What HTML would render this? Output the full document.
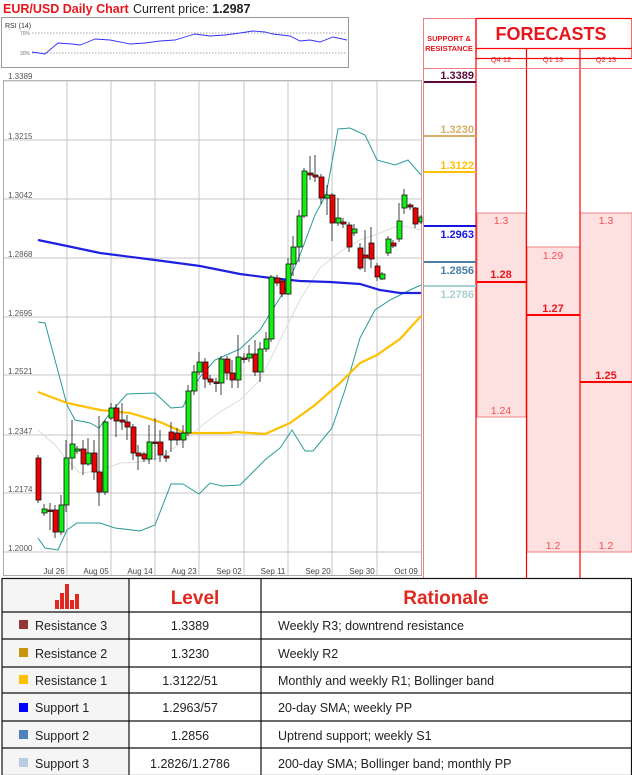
<!DOCTYPE html>
<html><head><meta charset="utf-8"><style>
body{margin:0;width:632px;height:775px;background:#fff;position:relative;overflow:hidden;font-family:"Liberation Sans",sans-serif}
.t{position:absolute;white-space:nowrap}
</style></head><body>
<svg width="632" height="775" style="position:absolute;left:0;top:0" font-family="Liberation Sans, sans-serif">
<text x="3" y="13" font-size="12.5" font-weight="bold" fill="#e8161b">EUR/USD Daily Chart</text>
<text x="133" y="13" font-size="12.5" fill="#222">Current price: <tspan font-weight="bold">1.2987</tspan></text>
<!-- RSI -->
<rect x="1.5" y="17.5" width="347" height="50" fill="#fff" stroke="#999"/>
<text x="5" y="28" font-size="7" fill="#333">RSI (14)</text>
<text x="20" y="35" font-size="5" fill="#777">70%</text>
<text x="20" y="55" font-size="5" fill="#777">30%</text>
<line x1="32" y1="33" x2="347" y2="33" stroke="#888" stroke-dasharray="1.5,1.5" stroke-width="0.7"/>
<line x1="32" y1="53" x2="347" y2="53" stroke="#888" stroke-dasharray="1.5,1.5" stroke-width="0.7"/>
<polyline fill="none" stroke="#3030ff" stroke-width="0.9" points="32,52 45,54 58,43 72,44 80,45 88,42 95,39 110,40 130,44 145,43 160,41 175,40 185,37 195,34 210,36 225,35 240,33 253,31 265,32 273,34 290,36 300,41 310,40 320,42 333,37 347,40"/>
<!-- main chart -->
<rect x="3.5" y="80.5" width="418" height="495" fill="#fff" stroke="#aaa"/>
<g stroke="#c4c4c4" stroke-width="1">
<line x1="4" y1="81" x2="421" y2="81"/><line x1="4" y1="140" x2="421" y2="140"/><line x1="4" y1="199" x2="421" y2="199"/><line x1="4" y1="258" x2="421" y2="258"/><line x1="4" y1="317" x2="421" y2="317"/><line x1="4" y1="375" x2="421" y2="375"/><line x1="4" y1="435" x2="421" y2="435"/><line x1="4" y1="493" x2="421" y2="493"/><line x1="4" y1="552" x2="421" y2="552"/>
<line x1="67" y1="81" x2="67" y2="575"/><line x1="111" y1="81" x2="111" y2="575"/><line x1="155" y1="81" x2="155" y2="575"/><line x1="199" y1="81" x2="199" y2="575"/><line x1="244" y1="81" x2="244" y2="575"/><line x1="288" y1="81" x2="288" y2="575"/><line x1="332" y1="81" x2="332" y2="575"/><line x1="377" y1="81" x2="377" y2="575"/>
</g>
<g font-size="8" fill="#555">
<text x="8" y="79">1.3389</text><text x="8" y="139">1.3215</text><text x="8" y="198">1.3042</text><text x="8" y="257">1.2868</text><text x="8" y="316">1.2695</text><text x="8" y="374">1.2521</text><text x="8" y="434">1.2347</text><text x="8" y="492">1.2174</text><text x="8" y="551">1.2000</text>
</g>
<g font-size="8" fill="#444" text-anchor="middle">
<text x="54" y="574">Jul 26</text><text x="96" y="574">Aug 05</text><text x="140" y="574">Aug 14</text><text x="184" y="574">Aug 23</text><text x="229" y="574">Sep 02</text><text x="273" y="574">Sep 11</text><text x="318" y="574">Sep 20</text><text x="362" y="574">Sep 30</text><text x="406" y="574">Oct 09</text>
</g>
<!-- indicator lines -->
<polyline fill="none" stroke="#ddd" stroke-width="1" points="38,430 55,445 67,460 80,473 99,471 120,463 140,462 160,458 185,440 205,423 220,412 240,400 260,380 285,330 300,300 320,268 340,252 360,240 380,233 400,225 421,230"/>
<polyline fill="none" stroke="#2a9a9a" stroke-width="1" points="38,322 45,323 55,360 67,405 75,420 90,423 99,428 111,412 127,394 155,393 171,408 183,407 188,396 200,377 215,360 240,349 260,330 271,312 285,290 300,255 315,215 326,195 338,129 350,128 365,135 377,160 395,165 408,160 421,175"/>
<polyline fill="none" stroke="#2a9a9a" stroke-width="1" points="38,538 45,548 58,550 67,530 77,523 100,523 115,528 140,531 155,525 171,484 183,484 199,494 210,483 222,486 240,485 255,470 266,459 280,448 292,430 305,451 313,451 332,428 345,390 360,338 375,310 390,300 410,290 421,285"/>
<polyline fill="none" stroke="#2020e0" stroke-width="2.2" points="38,240 67,246 100,253 155,260 200,266 240,274 271,278 300,281 330,282 360,284 380,290 400,293 421,293"/>
<polyline fill="none" stroke="#ffc000" stroke-width="2.2" points="38,392 67,403 100,410 130,413 160,422 185,433 230,433 236,432 265,434 290,423 315,405 340,383 360,363 377,355 400,339 421,316"/>
<!-- candles -->
<g stroke="#111" stroke-width="0.8" id="c">
<line x1="38" y1="455" x2="38" y2="503"/><rect x="36" y="458" width="5" height="42" fill="#e00"/>
<line x1="44" y1="504" x2="44" y2="516"/><rect x="42" y="509" width="5" height="4" fill="#1e1"/>
<line x1="50" y1="503" x2="50" y2="530"/><rect x="48" y="510" width="5" height="1.5" fill="#e00"/>
<line x1="55" y1="505" x2="55" y2="538"/><rect x="53" y="510" width="5" height="22" fill="#e00"/>
<line x1="61" y1="495" x2="61" y2="535"/><rect x="59" y="505" width="5" height="27" fill="#1e1"/>
<line x1="66" y1="440" x2="66" y2="512"/><rect x="64" y="458" width="5" height="47" fill="#1e1"/>
<line x1="72" y1="420" x2="72" y2="470"/><rect x="70" y="444" width="5" height="14" fill="#1e1"/>
<line x1="77" y1="446" x2="77" y2="454"/><rect x="75" y="449" width="5" height="2" fill="#1e1"/>
<line x1="83" y1="440" x2="83" y2="475"/><rect x="81" y="449" width="5" height="15" fill="#e00"/>
<line x1="88" y1="438" x2="88" y2="466"/><rect x="86" y="453" width="5" height="11" fill="#1e1"/>
<line x1="94" y1="440" x2="94" y2="480"/><rect x="92" y="453" width="5" height="19" fill="#e00"/>
<line x1="99" y1="416" x2="99" y2="506"/><rect x="97" y="472" width="5" height="20" fill="#e00"/>
<line x1="105" y1="420" x2="105" y2="495"/><rect x="103" y="422" width="5" height="70" fill="#1e1"/>
<line x1="111" y1="403" x2="111" y2="420"/><rect x="109" y="408" width="5" height="10" fill="#1e1"/>
<line x1="116" y1="404" x2="116" y2="437"/><rect x="114" y="408" width="5" height="13" fill="#e00"/>
<line x1="122" y1="403" x2="122" y2="430"/><rect x="120" y="420" width="5" height="2" fill="#e00"/>
<line x1="127" y1="415" x2="127" y2="440"/><rect x="125" y="422" width="5" height="5" fill="#e00"/>
<line x1="133" y1="424" x2="133" y2="460"/><rect x="131" y="427" width="5" height="26" fill="#e00"/>
<line x1="138" y1="445" x2="138" y2="470"/><rect x="136" y="453" width="5" height="3" fill="#e00"/>
<line x1="144" y1="452" x2="144" y2="462"/><rect x="142" y="454" width="5" height="5" fill="#e00"/>
<line x1="149" y1="425" x2="149" y2="464"/><rect x="147" y="442" width="5" height="17" fill="#1e1"/>
<line x1="155" y1="418" x2="155" y2="460"/><rect x="153" y="442" width="5" height="1.5" fill="#e00"/>
<line x1="160" y1="430" x2="160" y2="462"/><rect x="158" y="442" width="5" height="13" fill="#e00"/>
<line x1="166" y1="450" x2="166" y2="462"/><rect x="164" y="456" width="5" height="2" fill="#e00"/>
<line x1="171" y1="422" x2="171" y2="452"/><rect x="169" y="432" width="5" height="8" fill="#e00"/>
<line x1="177" y1="428" x2="177" y2="445"/><rect x="175" y="433" width="5" height="7" fill="#e00"/>
<line x1="183" y1="425" x2="183" y2="448"/><rect x="181" y="433" width="5" height="7" fill="#1e1"/>
<line x1="188" y1="385" x2="188" y2="436"/><rect x="186" y="391" width="5" height="42" fill="#1e1"/>
<line x1="194" y1="365" x2="194" y2="395"/><rect x="192" y="372" width="5" height="19" fill="#1e1"/>
<line x1="199" y1="352" x2="199" y2="375"/><rect x="197" y="362" width="5" height="10" fill="#1e1"/>
<line x1="205" y1="358" x2="205" y2="388"/><rect x="203" y="362" width="5" height="17" fill="#e00"/>
<line x1="210" y1="375" x2="210" y2="385"/><rect x="208" y="379" width="5" height="3" fill="#e00"/>
<line x1="216" y1="378" x2="216" y2="392"/><rect x="214" y="382" width="5" height="1.5" fill="#e00"/>
<line x1="221" y1="356" x2="221" y2="395"/><rect x="219" y="359" width="5" height="24" fill="#1e1"/>
<line x1="227" y1="356" x2="227" y2="380"/><rect x="225" y="359" width="5" height="14" fill="#e00"/>
<line x1="232" y1="360" x2="232" y2="388"/><rect x="230" y="373" width="5" height="7" fill="#e00"/>
<line x1="238" y1="335" x2="238" y2="388"/><rect x="236" y="357" width="5" height="23" fill="#1e1"/>
<line x1="244" y1="353" x2="244" y2="363"/><rect x="242" y="358" width="5" height="1.5" fill="#e00"/>
<line x1="249" y1="345" x2="249" y2="362"/><rect x="247" y="354" width="5" height="4" fill="#1e1"/>
<line x1="255" y1="340" x2="255" y2="376"/><rect x="253" y="354" width="5" height="18" fill="#e00"/>
<line x1="260" y1="342" x2="260" y2="382"/><rect x="258" y="349" width="5" height="23" fill="#1e1"/>
<line x1="266" y1="332" x2="266" y2="352"/><rect x="264" y="339" width="5" height="10" fill="#1e1"/>
<line x1="271" y1="275" x2="271" y2="342"/><rect x="269" y="277" width="5" height="62" fill="#1e1"/>
<line x1="277" y1="275" x2="277" y2="286"/><rect x="275" y="278" width="5" height="5" fill="#e00"/>
<line x1="282" y1="278" x2="282" y2="297"/><rect x="280" y="281" width="5" height="13" fill="#e00"/>
<line x1="288" y1="258" x2="288" y2="295"/><rect x="286" y="264" width="5" height="30" fill="#1e1"/>
<line x1="293" y1="236" x2="293" y2="276"/><rect x="291" y="247" width="5" height="17" fill="#1e1"/>
<line x1="299" y1="210" x2="299" y2="262"/><rect x="297" y="216" width="5" height="31" fill="#1e1"/>
<line x1="304" y1="168" x2="304" y2="218"/><rect x="302" y="171" width="5" height="45" fill="#1e1"/>
<line x1="310" y1="156" x2="310" y2="180"/><rect x="308" y="173" width="5" height="2" fill="#e00"/>
<line x1="315" y1="155" x2="315" y2="182"/><rect x="313" y="175" width="5" height="2" fill="#e00"/>
<line x1="321" y1="174" x2="321" y2="204"/><rect x="319" y="177" width="5" height="21" fill="#e00"/>
<line x1="327" y1="185" x2="327" y2="215"/><rect x="325" y="195" width="5" height="3" fill="#1e1"/>
<line x1="332" y1="193" x2="332" y2="241"/><rect x="330" y="195" width="5" height="28" fill="#e00"/>
<line x1="338" y1="198" x2="338" y2="226"/><rect x="336" y="218" width="5" height="5" fill="#1e1"/>
<line x1="343" y1="218" x2="343" y2="228"/><rect x="341" y="222" width="5" height="2" fill="#e00"/>
<line x1="349" y1="222" x2="349" y2="252"/><rect x="347" y="225" width="5" height="22" fill="#e00"/>
<line x1="354" y1="224" x2="354" y2="236"/><rect x="352" y="229" width="5" height="4" fill="#1e1"/>
<line x1="360" y1="243" x2="360" y2="270"/><rect x="358" y="248" width="5" height="20" fill="#e00"/>
<line x1="365" y1="230" x2="365" y2="272"/><rect x="363" y="255" width="5" height="3" fill="#e00"/>
<line x1="371" y1="227" x2="371" y2="268"/><rect x="369" y="243" width="5" height="16" fill="#e00"/>
<line x1="377" y1="263" x2="377" y2="281"/><rect x="375" y="266" width="5" height="11" fill="#e00"/>
<line x1="382" y1="272" x2="382" y2="280"/><rect x="380" y="274" width="5" height="5" fill="#1e1"/>
<line x1="388" y1="236" x2="388" y2="256"/><rect x="386" y="239" width="5" height="14" fill="#1e1"/>
<line x1="393" y1="240" x2="393" y2="248"/><rect x="391" y="243" width="5" height="3" fill="#e00"/>
<line x1="399" y1="203" x2="399" y2="242"/><rect x="397" y="221" width="5" height="18" fill="#1e1"/>
<line x1="404" y1="189" x2="404" y2="214"/><rect x="402" y="195" width="5" height="13" fill="#1e1"/>
<line x1="410" y1="203" x2="410" y2="210"/><rect x="408" y="205" width="5" height="2" fill="#e00"/>
<line x1="415" y1="207" x2="415" y2="228"/><rect x="413" y="208" width="5" height="16" fill="#e00"/>
<line x1="421" y1="215" x2="421" y2="224"/><rect x="419" y="217" width="3" height="5" fill="#1e1"/>
</g>
<!-- right panel -->
<rect x="424" y="18" width="52" height="560" fill="#fff"/>
<rect x="477" y="213" width="49" height="204" fill="#fde0e0" stroke="#f08080"/>
<rect x="527" y="247" width="53" height="305" fill="#fde0e0" stroke="#f08080"/>
<rect x="580" y="213" width="52" height="339" fill="#fde0e0" stroke="#f08080"/>
<g stroke="#f08080" fill="none">
<line x1="423.5" y1="18" x2="423.5" y2="578"/>
<line x1="424" y1="68.5" x2="476" y2="68.5"/>
</g>
<g stroke="#f00" fill="none" stroke-width="1.2">
<rect x="476" y="18.5" width="156" height="40"/>
<line x1="476" y1="48.5" x2="632" y2="48.5"/>
<line x1="476" y1="18" x2="476" y2="578"/>
<line x1="526.5" y1="48" x2="526.5" y2="578"/>
<line x1="580" y1="48" x2="580" y2="578"/>
<line x1="476" y1="68.5" x2="632" y2="68.5" stroke="#f08080" stroke-width="1"/>
<line x1="424" y1="18.5" x2="476" y2="18.5" stroke="#f08080" stroke-width="1"/>
</g>
<text x="449" y="41" font-size="7.5" fill="#e8161b" text-anchor="middle" font-weight="bold">SUPPORT &amp;</text>
<text x="449" y="51" font-size="7.5" fill="#e8161b" text-anchor="middle" font-weight="bold">RESISTANCE</text>
<text x="551" y="40" font-size="18" fill="#e8161b" text-anchor="middle" font-weight="bold">FORECASTS</text>
<g font-size="7.5" fill="#e8161b" text-anchor="middle"><text x="501" y="62">Q4 12</text><text x="553" y="62">Q1 13</text><text x="606" y="62">Q2 13</text></g>
<g font-size="11" font-weight="bold" text-anchor="end">
<text x="474" y="79" fill="#5a0a3a">1.3389</text>
<text x="474" y="133" fill="#d4b06a">1.3230</text>
<text x="474" y="169" fill="#ffc000">1.3122</text>
<text x="474" y="238" fill="#1515e0">1.2963</text>
<text x="474" y="274" fill="#4a80a8">1.2856</text>
<text x="474" y="298" fill="#a8d0d0">1.2786</text>
</g>
<line x1="424" y1="82" x2="476" y2="82" stroke="#5a0a3a" stroke-width="2"/>
<line x1="424" y1="136" x2="476" y2="136" stroke="#d4b06a" stroke-width="2"/>
<line x1="424" y1="172" x2="476" y2="172" stroke="#ffc000" stroke-width="2"/>
<line x1="424" y1="226" x2="476" y2="226" stroke="#1515e0" stroke-width="2"/>
<line x1="424" y1="262" x2="476" y2="262" stroke="#4a80a8" stroke-width="2"/>
<line x1="424" y1="286" x2="476" y2="286" stroke="#a8d0d0" stroke-width="2"/>
<g font-size="10.5" fill="#f05050" text-anchor="middle">
<text x="501" y="224">1.3</text><text x="501" y="414">1.24</text>
<text x="553" y="259">1.29</text><text x="553" y="549">1.2</text>
<text x="606" y="224">1.3</text><text x="606" y="549">1.2</text>
</g>
<g font-size="11" fill="#e8161b" text-anchor="middle" font-weight="bold">
<text x="501" y="278">1.28</text><text x="553" y="312">1.27</text><text x="606" y="379">1.25</text>
</g>
<line x1="477" y1="282" x2="526" y2="282" stroke="#f00" stroke-width="2"/>
<line x1="527" y1="315" x2="580" y2="315" stroke="#f00" stroke-width="2"/>
<line x1="580" y1="382" x2="632" y2="382" stroke="#f00" stroke-width="2"/>
<!-- table -->
<rect x="2" y="578" width="127" height="197" fill="#f5f5f5"/>
<g stroke="#111" stroke-width="1.2" fill="none">
<rect x="2" y="578.5" width="629.5" height="197"/>
<line x1="129" y1="578" x2="129" y2="775"/><line x1="261" y1="578" x2="261" y2="775"/>
<line x1="2" y1="612" x2="632" y2="612"/><line x1="2" y1="639" x2="632" y2="639"/><line x1="2" y1="667" x2="632" y2="667"/><line x1="2" y1="693" x2="632" y2="693"/><line x1="2" y1="721" x2="632" y2="721"/><line x1="2" y1="748" x2="632" y2="748"/>
</g>
<g fill="#e0281e"><rect x="55" y="600" width="4" height="9"/><rect x="60" y="593" width="4" height="16"/><rect x="65" y="584" width="4" height="25"/><rect x="70" y="600" width="4" height="9"/><rect x="75" y="594" width="4" height="15"/></g>
<text x="195" y="604" font-size="19" font-weight="bold" fill="#e0281e" text-anchor="middle">Level</text>
<text x="446" y="604" font-size="19" font-weight="bold" fill="#e0281e" text-anchor="middle">Rationale</text>
<g font-size="12.5" fill="#222">
<rect x="19" y="620" width="9" height="9" fill="#943634"/><text x="35" y="630">Resistance 3</text>
<rect x="19" y="648" width="9" height="9" fill="#c8960c"/><text x="35" y="658">Resistance 2</text>
<rect x="19" y="675" width="9" height="9" fill="#ffc000"/><text x="35" y="685">Resistance 1</text>
<rect x="19" y="703" width="9" height="9" fill="#0000ff"/><text x="35" y="712">Support 1</text>
<rect x="19" y="730" width="9" height="9" fill="#4f81bd"/><text x="35" y="740">Support 2</text>
<rect x="19" y="758" width="9" height="9" fill="#b8cce4"/><text x="35" y="768">Support 3</text>
<g text-anchor="middle"><text x="190" y="630">1.3389</text><text x="190" y="658">1.3230</text><text x="190" y="685">1.3122/51</text><text x="190" y="712">1.2963/57</text><text x="190" y="740">1.2856</text><text x="190" y="768">1.2826/1.2786</text></g>
<text x="278" y="630">Weekly R3; downtrend resistance</text>
<text x="278" y="658">Weekly R2</text>
<text x="278" y="685">Monthly and weekly R1; Bollinger band</text>
<text x="278" y="712">20-day SMA; weekly PP</text>
<text x="278" y="740">Uptrend support; weekly S1</text>
<text x="278" y="768">200-day SMA; Bollinger band; monthly PP</text>
</g>
</svg>
</body></html>
